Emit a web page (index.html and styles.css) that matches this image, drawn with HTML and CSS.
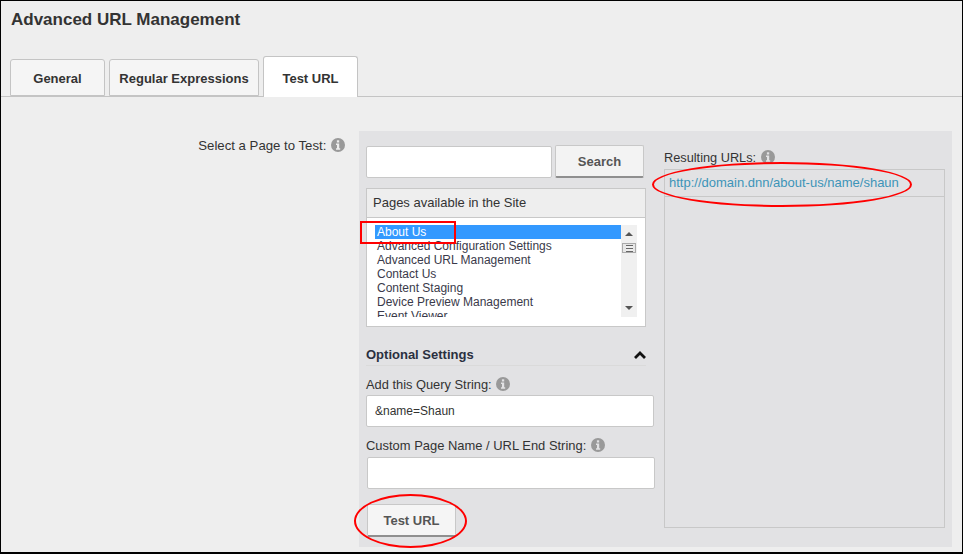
FILE: index.html
```html
<!DOCTYPE html>
<html lang="en">
<head>
    <meta charset="UTF-8">
    <title>Advanced URL Management</title>
    <link rel="stylesheet" href="styles.css">
</head>
<body>
    <div class="frame">
        <h1>Advanced URL Management</h1>

        <div class="tabs">
            <a class="tab">General</a>
            <a class="tab tab-wide">Regular Expressions</a>
            <a class="tab tab-active">Test URL</a>
        </div>

        <div class="form-row">
            <div class="form-label">
                Select a Page to Test:
                <svg class="info" viewBox="0 0 14 14"><circle cx="7" cy="7" r="7"/><rect x="5.9" y="2.3" width="2.3" height="2.2" fill="#eee"/><path d="M5 5.6h3.2v4.6h1v1.5H5v-1.5h1V7.1H5z" fill="#eee"/></svg>
            </div>

            <div class="panel">
                <div class="panel-left">
                    <div class="search-row">
                        <input class="text-input search-input" type="text">
                        <button class="btn search-btn">Search</button>
                    </div>

                    <div class="pages-box">
                        <div class="pages-head">Pages available in the Site</div>
                        <div class="pages-body">
                            <div class="pages-list">
                                <div class="page-item selected">About Us</div>
                                <div class="page-item">Advanced Configuration Settings</div>
                                <div class="page-item">Advanced URL Management</div>
                                <div class="page-item">Contact Us</div>
                                <div class="page-item">Content Staging</div>
                                <div class="page-item">Device Preview Management</div>
                                <div class="page-item">Event Viewer</div>
                            </div>
                            <div class="scrollbar">
                                <span class="arrow-up"></span>
                                <span class="thumb"></span>
                                <span class="arrow-down"></span>
                            </div>
                        </div>
                    </div>

                    <div class="optional-head">
                        <span>Optional Settings</span>
                        <svg class="chevron" viewBox="0 0 12 8"><path d="M1 7l5-5 5 5" fill="none" stroke="#111" stroke-width="2.8"/></svg>
                    </div>

                    <label class="field-label">
                        Add this Query String:
                        <svg class="info" viewBox="0 0 14 14"><circle cx="7" cy="7" r="7"/><rect x="5.9" y="2.3" width="2.3" height="2.2" fill="#e2e2e4"/><path d="M5 5.6h3.2v4.6h1v1.5H5v-1.5h1V7.1H5z" fill="#e2e2e4"/></svg>
                    </label>
                    <input class="text-input query-input" type="text" value="&amp;name=Shaun">

                    <label class="field-label custom-label">
                        Custom Page Name / URL End String:
                        <svg class="info" viewBox="0 0 14 14"><circle cx="7" cy="7" r="7"/><rect x="5.9" y="2.3" width="2.3" height="2.2" fill="#e2e2e4"/><path d="M5 5.6h3.2v4.6h1v1.5H5v-1.5h1V7.1H5z" fill="#e2e2e4"/></svg>
                    </label>
                    <input class="text-input custom-input" type="text">

                    <button class="btn test-btn">Test URL</button>
                </div>

                <div class="panel-right">
                    <div class="result-label">
                        Resulting URLs:
                        <svg class="info" viewBox="0 0 14 14"><circle cx="7" cy="7" r="7"/><rect x="5.9" y="2.3" width="2.3" height="2.2" fill="#e2e2e4"/><path d="M5 5.6h3.2v4.6h1v1.5H5v-1.5h1V7.1H5z" fill="#e2e2e4"/></svg>
                    </div>
                    <div class="result-box">
                        <div class="result-row">http://domain.dnn/about-us/name/shaun</div>
                    </div>
                </div>
            </div>
        </div>

        <!-- red annotations drawn over the screenshot -->
        <div class="mark-rect"></div>
        <div class="mark-oval oval-url"></div>
        <div class="mark-oval oval-btn"></div>
    </div>
</body>
</html>
```

FILE: styles.css
```css
* {
    box-sizing: border-box;
}

html, body {
    margin: 0;
    height: 100%;
}

body {
    font-family: "Liberation Sans", Arial, sans-serif;
    color: #333;
    background: #eee;
}

.frame {
    position: relative;
    height: 554px;
    border: solid #000;
    border-width: 1px 1px 2px 1px;
    overflow: hidden;
    background: #eee;
}

h1 {
    margin: 0;
    padding: 9px 0 0 10px;
    height: 55px;
    font-size: 17px;
    line-height: 20px;
    font-weight: bold;
}

.tabs {
    display: flex;
    align-items: flex-end;
    gap: 4px;
    height: 41px;
    padding-left: 9px;
    border-bottom: 1px solid #c4c4c4;
}

.tab {
    width: 95px;
    height: 37px;
    font-size: 13px;
    font-weight: bold;
    line-height: 38px;
    text-align: center;
    background: #f5f5f5;
    border: 1px solid #c4c4c4;
    border-radius: 3px 3px 0 0;
}

.tab-wide {
    width: 150px;
}

.tab-active {
    height: 41px;
    margin-bottom: -1px;
    line-height: 44px;
    background: #fff;
    border-bottom: none;
}

.form-row {
    display: flex;
    margin-top: 34px;
}

.form-label {
    width: 358px;
    padding: 7px 14px 0 0;
    font-size: 13.2px;
    line-height: 16px;
    text-align: right;
}

.info {
    width: 14px;
    height: 14px;
    margin-left: 1px;
    vertical-align: -2px;
    fill: #999;
}

.panel {
    display: flex;
    width: 593px;
    height: 416px;
    background: #e2e2e4;
}

.panel-left {
    width: 304px;
    padding: 14px 0 0 7px;
}

.search-row {
    display: flex;
    align-items: flex-start;
    gap: 3px;
}

.text-input {
    display: block;
    height: 32px;
    padding: 0 8px;
    font-family: inherit;
    font-size: 12px;
    color: #333;
    background: #fff;
    border: 1px solid #c8c8c8;
    border-radius: 2px;
    outline: none;
}

.search-input {
    width: 186px;
    margin-top: 1px;
}

.btn {
    font-family: inherit;
    font-size: 13px;
    font-weight: bold;
    color: #555;
    background: #f3f3f3;
    border: 1px solid #c8c8c8;
    border-bottom: 2px solid #8f8f8f;
    border-radius: 2px;
}

.search-btn {
    width: 89px;
    height: 33px;
}

.pages-box {
    width: 280px;
    height: 139px;
    margin-top: 10px;
    background: #fff;
    border: 1px solid #c8c8c8;
}

.pages-head {
    height: 29px;
    padding-left: 6px;
    font-size: 13px;
    line-height: 27px;
    background: #eee;
    border-bottom: 1px solid #c8c8c8;
}

.pages-body {
    display: flex;
    padding: 7px 0 0 8px;
}

.pages-list {
    width: 246px;
    height: 92px;
    overflow: hidden;
    font-size: 12px;
    line-height: 14px;
}

.page-item {
    height: 14px;
    padding-left: 2px;
    color: #3a3a4a;
}

.page-item.selected {
    color: #fff;
    background: #3399ff;
}

.scrollbar {
    position: relative;
    width: 16px;
    height: 92px;
    background: #f0f0f0;
}

.arrow-up,
.arrow-down {
    position: absolute;
    left: 4px;
    border-left: 4px solid transparent;
    border-right: 4px solid transparent;
}

.arrow-up {
    top: 7px;
    border-bottom: 4px solid #555;
}

.arrow-down {
    bottom: 7px;
    border-top: 4px solid #555;
}

.thumb {
    position: absolute;
    top: 18px;
    left: 1px;
    width: 14px;
    height: 10px;
    background: repeating-linear-gradient(#666 0 1px, #eee 1px 3px) center / 7px 7px no-repeat, #e6e6e6;
    border: 1px solid #aaa;
}

.optional-head {
    display: flex;
    justify-content: space-between;
    align-items: center;
    width: 280px;
    height: 24px;
    margin-top: 15px;
    padding-top: 2px;
    font-size: 13px;
    font-weight: bold;
    color: #2a3040;
    border-bottom: 1px solid #dadada;
}

.chevron {
    width: 12px;
    height: 8px;
}

.field-label {
    display: block;
    margin-top: 11px;
    font-size: 12.85px;
    line-height: 16px;
}

.query-input {
    width: 288px;
    margin-top: 2px;
}

.custom-label {
    margin-top: 11px;
    font-size: 12.95px;
}

.custom-input {
    width: 288px;
    margin: 3px 0 0 1px;
}

.test-btn {
    display: block;
    width: 89px;
    height: 33px;
    margin: 15px 0 0 1px;
    background: #f5f5f5;
}

.panel-right {
    width: 282px;
    padding: 19px 0 0 1px;
    font-size: 12.75px;
}

.result-label {
    height: 19px;
    line-height: 16px;
}

.result-box {
    width: 281px;
    height: 359px;
    border: 1px solid #c8c8c8;
}

.result-row {
    height: 27px;
    padding-left: 4px;
    line-height: 26px;
    font-size: 13px;
    color: #3d94b8;
    border-bottom: 1px solid #c8c8c8;
}

.mark-rect {
    position: absolute;
    left: 359px;
    top: 220px;
    width: 96px;
    height: 23px;
    border: 2px solid #f00;
}

.mark-oval {
    position: absolute;
    border: 2.5px solid #f00;
    border-radius: 50%;
}

.oval-url {
    left: 651px;
    top: 161px;
    width: 260px;
    height: 45px;
}

.oval-btn {
    left: 353px;
    top: 493px;
    width: 113px;
    height: 54px;
}
```
